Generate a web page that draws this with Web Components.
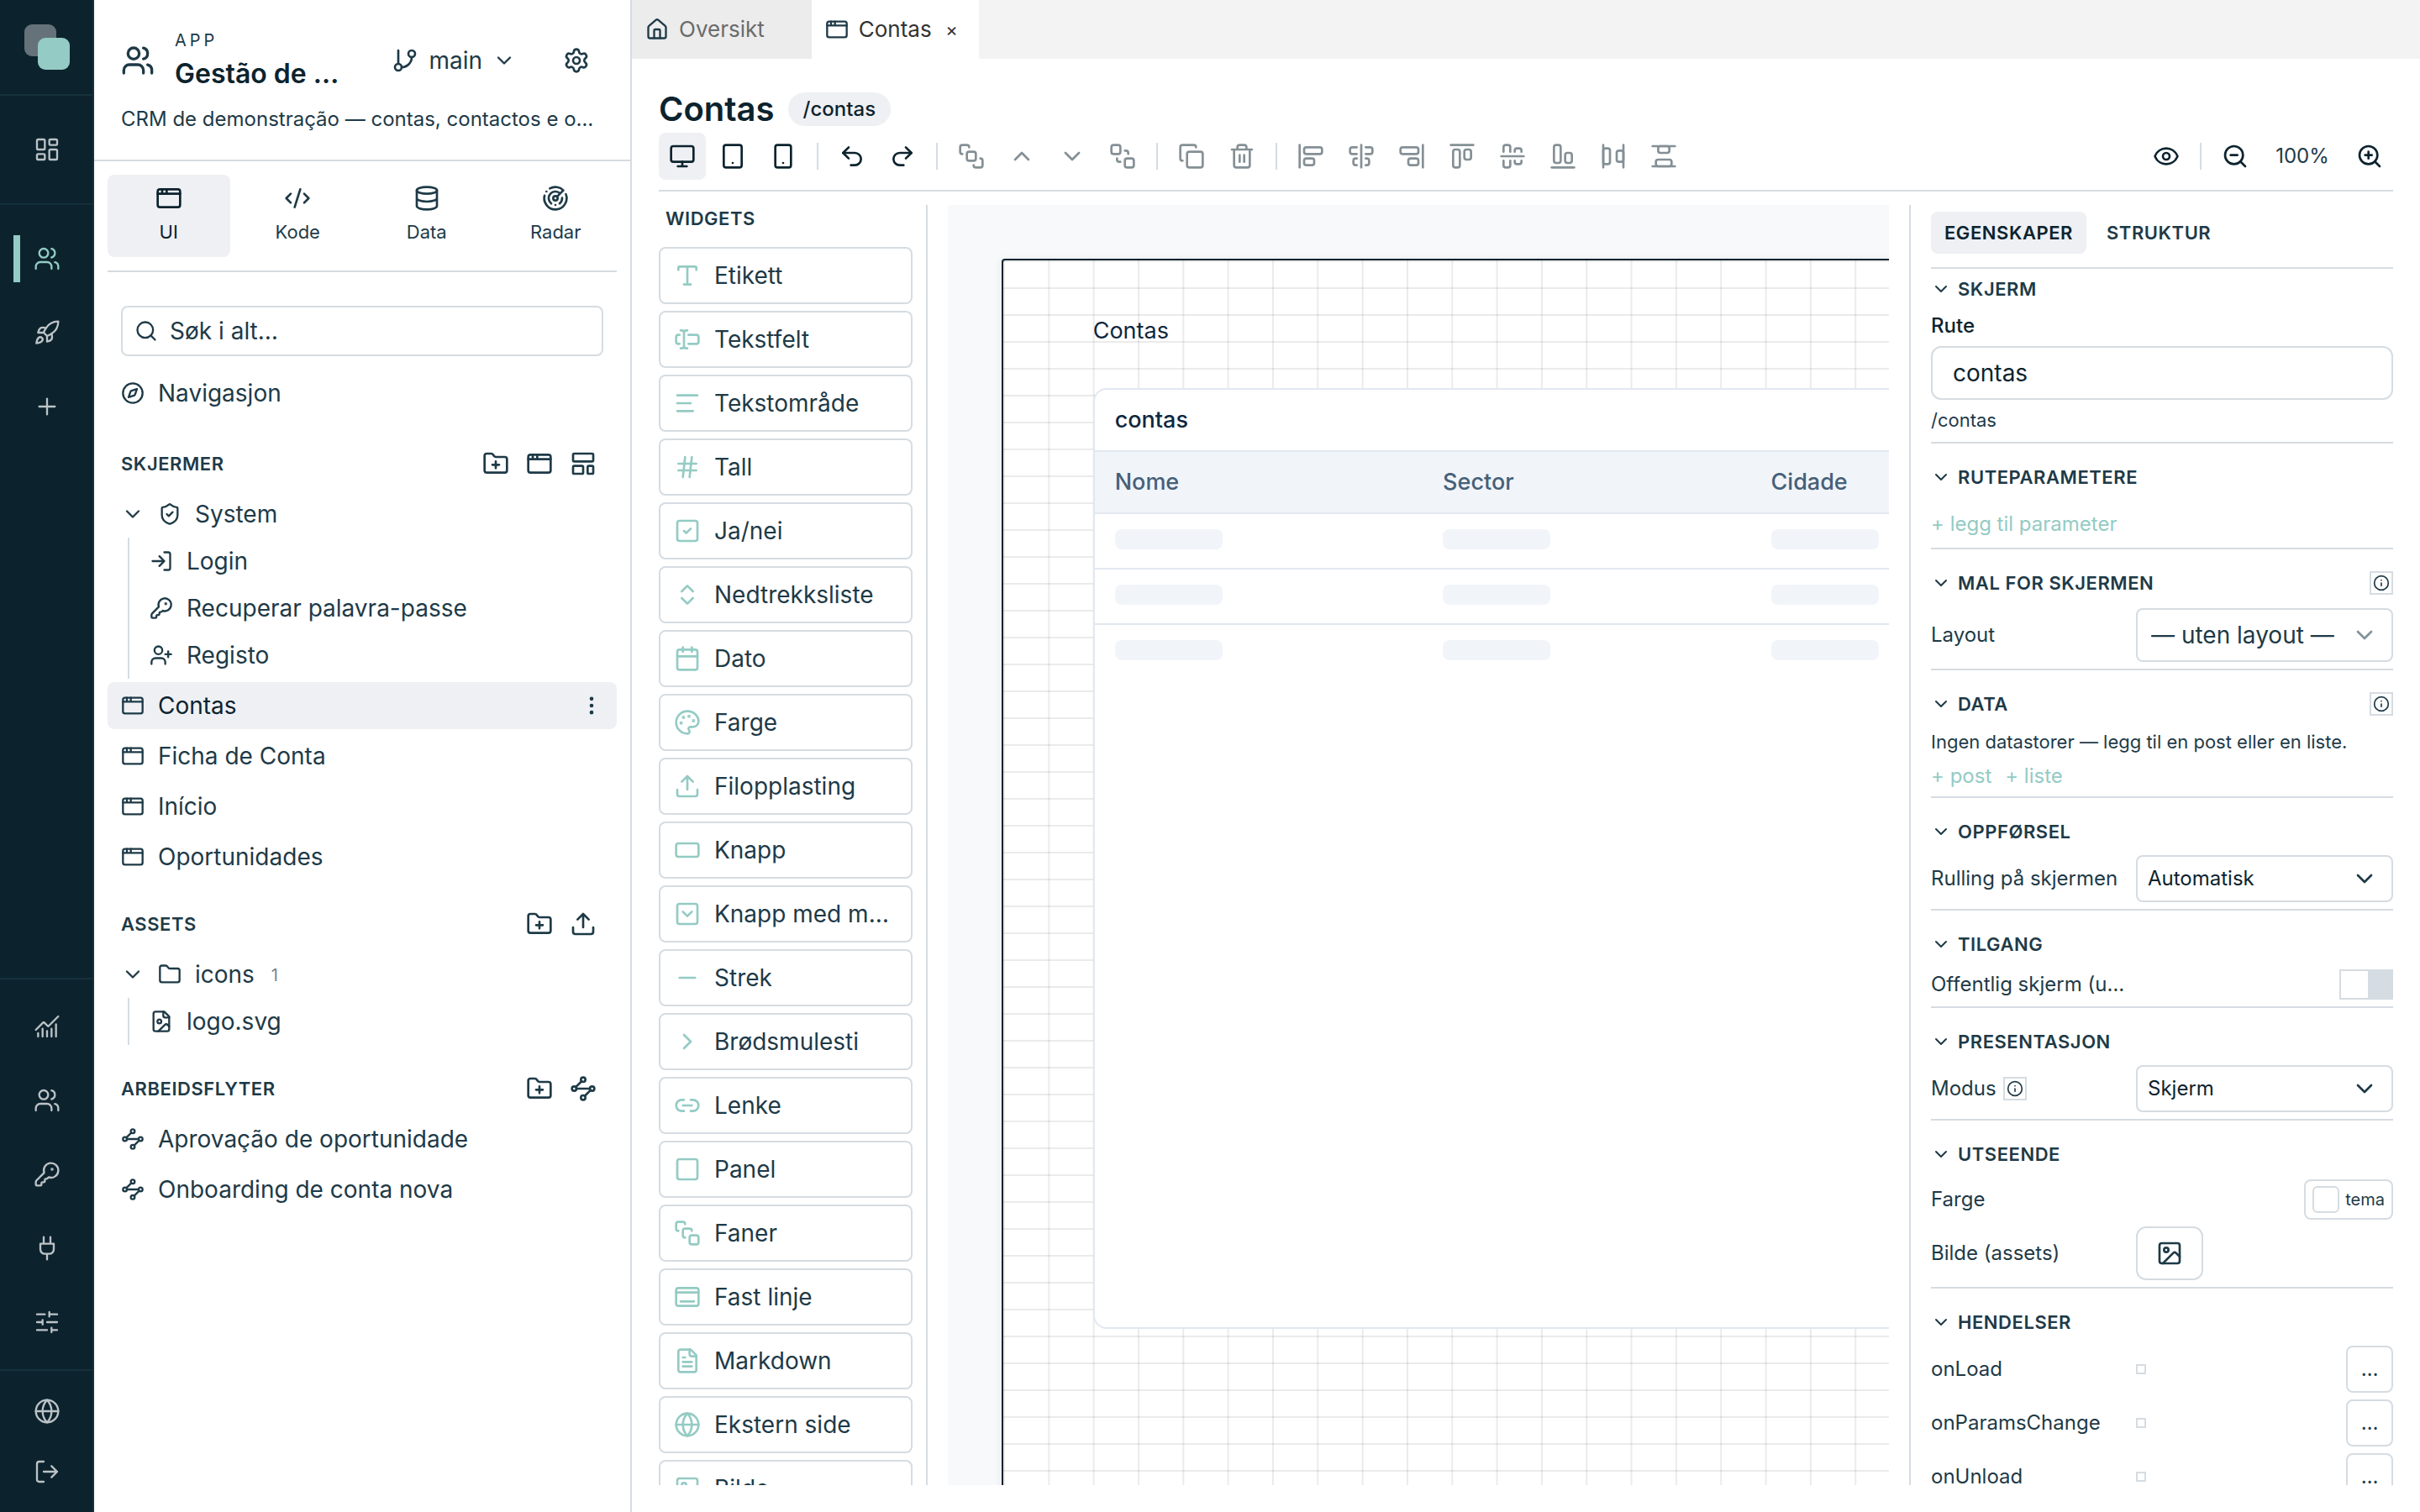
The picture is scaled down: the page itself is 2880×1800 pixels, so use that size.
<!DOCTYPE html>
<html lang="no">
<head>
<meta charset="utf-8">
<title>Contas</title>
<style>
  body {
    margin: 0;
    height: 100vh;
    overflow: hidden;
    font-family: Inter, "Liberation Sans", sans-serif;
    font-size: 28px;
    line-height: 36px;
    color: #1e3a47;
    background: #fff;
    --ink: #0c232e;
    --text: #1e3a47;
    --line: #d5dce2;
    --soft: #eff0f4;
    --teal: #94cbc4;
  }
</style>
</head>
<body>
<builder-app></builder-app>

<script>
// Icon shapes on a 24x24 grid
const ICONS = {
  dashboard: '<rect width="7" height="9" x="3" y="3" rx="1"/><rect width="7" height="5" x="14" y="3" rx="1"/><rect width="7" height="9" x="14" y="12" rx="1"/><rect width="7" height="5" x="3" y="16" rx="1"/>',
  users: '<path d="M16 21v-2a4 4 0 0 0-4-4H6a4 4 0 0 0-4 4v2M16 3.128a4 4 0 0 1 0 7.744M22 21v-2a4 4 0 0 0-3-3.87"/><circle cx="9" cy="7" r="4"/>',
  rocket: '<path d="M4.5 16.5c-1.5 1.26-2 5-2 5s3.74-.5 5-2c.71-.84.7-2.13-.09-2.91a2.18 2.18 0 0 0-2.91-.09z"/><path d="m12 15-3-3a22 22 0 0 1 2-3.95A12.88 12.88 0 0 1 22 2c0 2.72-.78 7.5-6 11a22.35 22.35 0 0 1-4 2z"/><path d="M9 12H4s.55-3.03 2-4c1.62-1.08 5 0 5 0M12 15v5s3.03-.55 4-2c1.08-1.62 0-5 0-5"/>',
  plus: '<path d="M5 12h14M12 5v14"/>',
  chart: '<path d="M12 16v5M16 14v7M20 10v11M22 3l-8.646 8.646a.5.5 0 0 1-.708 0L9.354 8.354a.5.5 0 0 0-.707 0L2 15M4 18v3M8 14v7"/>',
  key: '<path d="M2.586 17.414A2 2 0 0 0 2 18.828V21a1 1 0 0 0 1 1h3a1 1 0 0 0 1-1v-1a1 1 0 0 1 1-1h1a1 1 0 0 0 1-1v-1a1 1 0 0 1 1-1h.172a2 2 0 0 0 1.414-.586l.814-.814a6.5 6.5 0 1 0-4-4z"/><circle cx="16.5" cy="7.5" r=".5" fill="currentColor"/>',
  plug: '<path d="M12 22v-5M9 8V2M15 8V2M18 8v5a4 4 0 0 1-4 4h-4a4 4 0 0 1-4-4V8Z"/>',
  sliders: '<path d="M10 5H3M12 19H3M14 3v4M16 17v4M21 12h-9M21 19h-5M21 5h-7M8 10v4M8 12H3"/>',
  globe: '<circle cx="12" cy="12" r="10"/><path d="M12 2a14.5 14.5 0 0 0 0 20 14.5 14.5 0 0 0 0-20M2 12h20"/>',
  logout: '<path d="m16 17 5-5-5-5M21 12H9M9 21H5a2 2 0 0 1-2-2V5a2 2 0 0 1 2-2h4"/>',
  login: '<path d="m10 17 5-5-5-5M15 12H3M15 3h4a2 2 0 0 1 2 2v14a2 2 0 0 1-2 2h-4"/>',
  branch: '<path d="M6 3v12M18 9a9 9 0 0 1-9 9"/><circle cx="18" cy="6" r="3"/><circle cx="6" cy="18" r="3"/>',
  down: '<path d="m6 9 6 6 6-6"/>',
  up: '<path d="m18 15-6-6-6 6"/>',
  right: '<path d="m9 18 6-6-6-6"/>',
  settings: '<path d="M9.671 4.136a2.34 2.34 0 0 1 4.659 0 2.34 2.34 0 0 0 3.319 1.915 2.34 2.34 0 0 1 2.33 4.033 2.34 2.34 0 0 0 0 3.831 2.34 2.34 0 0 1-2.33 4.033 2.34 2.34 0 0 0-3.319 1.915 2.34 2.34 0 0 1-4.659 0 2.34 2.34 0 0 0-3.32-1.915 2.34 2.34 0 0 1-2.33-4.033 2.34 2.34 0 0 0 0-3.831A2.34 2.34 0 0 1 6.35 6.051a2.34 2.34 0 0 0 3.319-1.915"/><circle cx="12" cy="12" r="3"/>',
  window: '<rect x="2" y="4" width="20" height="16" rx="2"/><path d="M10 4v4M2 8h20M6 4v4"/>',
  code: '<path d="m18 16 4-4-4-4M6 8l-4 4 4 4M14.5 4l-5 16"/>',
  database: '<ellipse cx="12" cy="5" rx="9" ry="3"/><path d="M3 5V19A9 3 0 0 0 21 19V5M3 12A9 3 0 0 0 21 12"/>',
  radar: '<path d="M19.07 4.93A10 10 0 0 0 6.99 3.34M4 6h.01M2.29 9.62A10 10 0 1 0 21.31 8.35M16.24 7.76A6 6 0 1 0 8.23 16.67M12 18h.01M17.99 11.66A6 6 0 0 1 15.77 16.67M13.41 10.59l5.66-5.66"/><circle cx="12" cy="12" r="2"/>',
  search: '<path d="m21 21-4.34-4.34"/><circle cx="11" cy="11" r="8"/>',
  compass: '<circle cx="12" cy="12" r="10"/><path d="m16.24 7.76-1.804 5.411a2 2 0 0 1-1.265 1.265L7.76 16.24l1.804-5.411a2 2 0 0 1 1.265-1.265z"/>',
  folder: '<path d="M20 20a2 2 0 0 0 2-2V8a2 2 0 0 0-2-2h-7.9a2 2 0 0 1-1.69-.9L9.6 3.9A2 2 0 0 0 7.93 3H4a2 2 0 0 0-2 2v13a2 2 0 0 0 2 2Z"/>',
  folderPlus: '<path d="M12 10v6M9 13h6M20 20a2 2 0 0 0 2-2V8a2 2 0 0 0-2-2h-7.9a2 2 0 0 1-1.69-.9L9.6 3.9A2 2 0 0 0 7.93 3H4a2 2 0 0 0-2 2v13a2 2 0 0 0 2 2Z"/>',
  template: '<rect width="18" height="7" x="3" y="3" rx="1"/><rect width="9" height="7" x="3" y="14" rx="1"/><rect width="5" height="7" x="16" y="14" rx="1"/>',
  shield: '<path d="M20 13c0 5-3.5 7.5-7.66 8.95a1 1 0 0 1-.67-.01C7.5 20.5 4 18 4 13V6a1 1 0 0 1 1-1c2 0 4.5-1.2 6.24-2.72a1.17 1.17 0 0 1 1.52 0C14.51 3.81 17 5 19 5a1 1 0 0 1 1 1z"/><path d="m9 12 2 2 4-4"/>',
  userPlus: '<path d="M16 21v-2a4 4 0 0 0-4-4H6a4 4 0 0 0-4 4v2M19 8v6M22 11h-6"/><circle cx="9" cy="7" r="4"/>',
  upload: '<path d="M12 3v12M17 8l-5-5-5 5M21 15v4a2 2 0 0 1-2 2H5a2 2 0 0 1-2-2v-4"/>',
  fileImage: '<path d="M15 2H6a2 2 0 0 0-2 2v16a2 2 0 0 0 2 2h12a2 2 0 0 0 2-2V7Z"/><path d="M14 2v4a2 2 0 0 0 2 2h4M20 17l-1.296-1.296a2.41 2.41 0 0 0-3.408 0L9 22"/><circle cx="10" cy="12" r="2"/>',
  fileText: '<path d="M15 2H6a2 2 0 0 0-2 2v16a2 2 0 0 0 2 2h12a2 2 0 0 0 2-2V7Z"/><path d="M14 2v4a2 2 0 0 0 2 2h4M10 9H8M16 13H8M16 17H8"/>',
  waypoints: '<path d="m10.586 5.414-5.172 5.172M18.586 13.414l-5.172 5.172M6 12h12"/><circle cx="12" cy="20" r="2"/><circle cx="12" cy="4" r="2"/><circle cx="20" cy="12" r="2"/><circle cx="4" cy="12" r="2"/>',
  house: '<path d="M15 21v-8a1 1 0 0 0-1-1h-4a1 1 0 0 0-1 1v8"/><path d="M3 10a2 2 0 0 1 .709-1.528l7-6a2 2 0 0 1 2.582 0l7 6A2 2 0 0 1 21 10v9a2 2 0 0 1-2 2H5a2 2 0 0 1-2-2z"/>',
  more: '<circle cx="12" cy="12" r="1"/><circle cx="12" cy="5" r="1"/><circle cx="12" cy="19" r="1"/>',
  monitor: '<rect width="20" height="14" x="2" y="3" rx="2"/><path d="M8 21h8M12 17v4"/>',
  tablet: '<rect width="16" height="20" x="4" y="2" rx="2"/><path d="M12 18h.01"/>',
  phone: '<rect width="14" height="20" x="5" y="2" rx="2"/><path d="M12 18h.01"/>',
  undo: '<path d="M9 14 4 9l5-5"/><path d="M4 9h10.5a5.5 5.5 0 0 1 0 11H11"/>',
  redo: '<path d="m15 14 5-5-5-5"/><path d="M20 9H9.5a5.5 5.5 0 0 0 0 11H13"/>',
  front: '<rect x="8" y="8" width="8" height="8" rx="2"/><path d="M4 10a2 2 0 0 1-2-2V4a2 2 0 0 1 2-2h4a2 2 0 0 1 2 2M14 20a2 2 0 0 0 2 2h4a2 2 0 0 0 2-2v-4a2 2 0 0 0-2-2"/>',
  back: '<rect x="14" y="14" width="8" height="8" rx="2"/><rect x="2" y="2" width="8" height="8" rx="2"/><path d="M7 14v1a2 2 0 0 0 2 2h1M14 7h1a2 2 0 0 1 2 2v1"/>',
  copy: '<rect width="14" height="14" x="8" y="8" rx="2"/><path d="M4 16c-1.1 0-2-.9-2-2V4c0-1.1.9-2 2-2h10c1.1 0 2 .9 2 2"/>',
  trash: '<path d="M3 6h18M19 6v14a2 2 0 0 1-2 2H7a2 2 0 0 1-2-2V6M8 6V4a2 2 0 0 1 2-2h4a2 2 0 0 1 2 2v2M10 11v6M14 11v6"/>',
  alignLeft: '<rect width="9" height="6" x="6" y="14" rx="2"/><rect width="16" height="6" x="6" y="4" rx="2"/><path d="M2 2v20"/>',
  alignCenter: '<path d="M12 2v20M8 10H4a2 2 0 0 1-2-2V6c0-1.1.9-2 2-2h4M16 10h4a2 2 0 0 0 2-2V6a2 2 0 0 0-2-2h-4M8 20H7a2 2 0 0 1-2-2v-2c0-1.1.9-2 2-2h1M16 14h1a2 2 0 0 1 2 2v2a2 2 0 0 1-2 2h-1"/>',
  alignRight: '<rect width="16" height="6" x="2" y="4" rx="2"/><rect width="9" height="6" x="9" y="14" rx="2"/><path d="M22 22V2"/>',
  alignTop: '<rect width="6" height="16" x="4" y="6" rx="2"/><rect width="6" height="9" x="14" y="6" rx="2"/><path d="M22 2H2"/>',
  alignMiddle: '<path d="M2 12h20M10 16v4a2 2 0 0 1-2 2H6a2 2 0 0 1-2-2v-4M10 8V4a2 2 0 0 0-2-2H6a2 2 0 0 0-2 2v4M20 16v1a2 2 0 0 1-2 2h-2a2 2 0 0 1-2-2v-1M14 8V7c0-1.1.9-2 2-2h2a2 2 0 0 1 2 2v1"/>',
  alignBottom: '<rect width="6" height="16" x="4" y="2" rx="2"/><rect width="6" height="9" x="14" y="9" rx="2"/><path d="M22 22H2"/>',
  spaceH: '<rect width="6" height="14" x="3" y="5" rx="2"/><rect width="6" height="10" x="15" y="7" rx="2"/><path d="M3 2v20M21 2v20"/>',
  spaceV: '<rect width="14" height="6" x="5" y="15" rx="2"/><rect width="10" height="6" x="7" y="3" rx="2"/><path d="M2 21h20M2 3h20"/>',
  eye: '<path d="M2.062 12.348a1 1 0 0 1 0-.696 10.75 10.75 0 0 1 19.876 0 1 1 0 0 1 0 .696 10.75 10.75 0 0 1-19.876 0"/><circle cx="12" cy="12" r="3"/>',
  zoomOut: '<circle cx="11" cy="11" r="8"/><path d="m21 21-4.35-4.35M8 11h6"/>',
  zoomIn: '<circle cx="11" cy="11" r="8"/><path d="m21 21-4.35-4.35M8 11h6M11 8v6"/>',
  type: '<path d="M12 4v16M4 7V5a1 1 0 0 1 1-1h14a1 1 0 0 1 1 1v2M9 20h6"/>',
  textInput: '<path d="M12 20h-1a2 2 0 0 1-2-2 2 2 0 0 1-2 2H6M13 8h7a2 2 0 0 1 2 2v4a2 2 0 0 1-2 2h-7M5 16H4a2 2 0 0 1-2-2v-4a2 2 0 0 1 2-2h1M6 4h1a2 2 0 0 1 2 2 2 2 0 0 1 2-2h1M9 6v12"/>',
  text: '<path d="M21 5H3M15 12H3M17 19H3"/>',
  hash: '<path d="M4 9h16M4 15h16M10 3 8 21M16 3l-2 18"/>',
  check: '<rect width="18" height="18" x="3" y="3" rx="2"/><path d="m9 12 2 2 4-4"/>',
  upDown: '<path d="m7 15 5 5 5-5M7 9l5-5 5 5"/>',
  calendar: '<path d="M8 2v4M16 2v4M3 10h18"/><rect width="18" height="18" x="3" y="4" rx="2"/>',
  palette: '<path d="M12 22a1 1 0 0 1 0-20 10 9 0 0 1 10 9 5 5 0 0 1-5 5h-2.25a1.75 1.75 0 0 0-1.4 2.8l.3.4a1.75 1.75 0 0 1-1.4 2.8z"/><g fill="currentColor"><circle cx="13.5" cy="6.5" r=".5"/><circle cx="17.5" cy="10.5" r=".5"/><circle cx="6.5" cy="12.5" r=".5"/><circle cx="8.5" cy="7.5" r=".5"/></g>',
  rectangle: '<rect width="20" height="12" x="2" y="6" rx="2"/>',
  squareDown: '<rect width="18" height="18" x="3" y="3" rx="2"/><path d="m16 10-4 4-4-4"/>',
  minus: '<path d="M5 12h14"/>',
  link: '<path d="M9 17H7A5 5 0 0 1 7 7h2M15 7h2a5 5 0 1 1 0 10h-2M8 12h8"/>',
  square: '<rect width="18" height="18" x="3" y="3" rx="2"/>',
  stack: '<path d="M4 10c-1.1 0-2-.9-2-2V4c0-1.1.9-2 2-2h4c1.1 0 2 .9 2 2M10 16c-1.1 0-2-.9-2-2v-4c0-1.1.9-2 2-2h4c1.1 0 2 .9 2 2"/><rect width="8" height="8" x="14" y="14" rx="2"/>',
  dock: '<path d="M2 8h20M6 16h12"/><rect width="20" height="16" x="2" y="4" rx="2"/>',
  image: '<rect width="18" height="18" x="3" y="3" rx="2"/><circle cx="9" cy="9" r="2"/><path d="m21 15-3.086-3.086a2 2 0 0 0-2.828 0L6 21"/>',
  info: '<circle cx="12" cy="12" r="10"/><path d="M12 16v-4M12 8h.01"/>'
};

// Shared reset for the native controls
const RESET = `
  * { box-sizing: border-box; }
  button, input, select {
    font: inherit; color: inherit; background: none;
    border: 0; margin: 0; padding: 0; text-align: left;
  }
  button { cursor: pointer; }
  a { color: inherit; text-decoration: none; }
  h1, h2, p { margin: 0; font: inherit; }
`;

class UiIcon extends HTMLElement {
  connectedCallback() {
    const size = this.getAttribute('size') || 32;
    this.attachShadow({ mode: 'open' }).innerHTML = `
      <style>
        :host { display: block; flex: none; width: ${size}px; height: ${size}px; }
        svg { display: block; width: 100%; height: 100%; }
      </style>
      <svg viewBox="0 0 24 24" fill="none" stroke="currentColor" stroke-width="${this.getAttribute('stroke') || 2}"
        stroke-linecap="round" stroke-linejoin="round" aria-hidden="true">${ICONS[this.getAttribute('name')]}</svg>`;
  }
}
customElements.define('ui-icon', UiIcon);

// Dark strip on the far left
class AppRail extends HTMLElement {
  connectedCallback() {
    const item = ([icon, label, active]) =>
      `<button class="${active ? 'on' : ''}" aria-label="${label}"><ui-icon name="${icon}" stroke="1.75"></ui-icon></button>`;
    this.attachShadow({ mode: 'open' }).innerHTML = `
      <style>
        ${RESET}
        :host { display: flex; flex-direction: column; background: var(--ink); color: #bcc3c6; border-right: 2px solid #15303c; box-sizing: border-box; }
        .logo { height: 114px; padding: 28px 26px; border-bottom: 2px solid #15303c; }
        .logo svg { display: block; width: 58px; height: 58px; }
        nav { display: flex; flex-direction: column; align-items: stretch; gap: 32px; padding: 36px 0; border-bottom: 2px solid #15303c; }
        nav.grow { flex: 1; }
        nav.mid { padding: 28px 0; }
        nav.last { gap: 16px; padding: 20px 0; border-bottom: 0; }
        button { display: flex; align-items: center; height: 56px; padding-left: 16px; border-left: 8px solid transparent; margin-left: 16px; }
        button.on { color: var(--teal); border-color: var(--teal); }
      </style>
      <div class="logo">
        <svg viewBox="0 0 58 58"><rect x="3" y="1" width="38" height="38" rx="9" fill="#65727a"/><rect x="19" y="17" width="38" height="38" rx="9" fill="#94cbc4"/></svg>
      </div>
      <nav>${item(['dashboard', 'Oversikt'])}</nav>
      <nav class="grow">${[['users', 'CRM', true], ['rocket', 'Lansering'], ['plus', 'Ny app']].map(item).join('')}</nav>
      <nav class="mid">${[['chart', 'Statistikk'], ['users', 'Brukere'], ['key', 'Tilgang'], ['plug', 'Integrasjoner'], ['sliders', 'Innstillinger']].map(item).join('')}</nav>
      <nav class="last">${[['globe', 'Språk'], ['logout', 'Logg ut']].map(item).join('')}</nav>`;
  }
}
customElements.define('app-rail', AppRail);

// One row of the project tree. The slot takes the name.
class TreeRow extends HTMLElement {
  connectedCallback() {
    this.attachShadow({ mode: 'open' }).innerHTML = `
      <style>
        ${RESET}
        :host { display: block; }
        a { display: flex; align-items: center; gap: 16px; height: 56px; padding: 0 16px; border-radius: 8px; }
        :host([selected]) a { background: var(--soft); color: var(--ink); }
        :host([selected]) ui-icon { color: var(--text); }
        :host([child]) a { padding-left: 24px; }
        .name { flex: 1; white-space: nowrap; }
      </style>
      <a href="#">
        ${this.hasAttribute('open') ? '<ui-icon name="down" size="28"></ui-icon>' : ''}
        <ui-icon name="${this.getAttribute('icon')}" size="28"></ui-icon>
        <span class="name"><slot></slot></span>
        ${this.hasAttribute('selected') ? '<ui-icon name="more" size="28"></ui-icon>' : ''}
      </a>`;
  }
}
customElements.define('tree-row', TreeRow);

// Heading with action icons, rows in the slot
class TreeSection extends HTMLElement {
  connectedCallback() {
    const actions = this.getAttribute('actions').split(' ')
      .map(n => `<button aria-label="${n}"><ui-icon name="${n}"></ui-icon></button>`).join('');
    this.attachShadow({ mode: 'open' }).innerHTML = `
      <style>
        ${RESET}
        :host { display: flex; flex-direction: column; gap: 4px; margin-top: 24px; }
        header { display: flex; align-items: center; justify-content: space-between; height: 56px; padding: 0 24px 0 16px; }
        h2 { font-size: 22px; font-weight: 600; letter-spacing: .025em; }
        div { display: flex; gap: 20px; }
      </style>
      <header><h2>${this.getAttribute('label')}</h2><div>${actions}</div></header>
      <slot></slot>`;
  }
}
customElements.define('tree-section', TreeSection);

class SidePanel extends HTMLElement {
  connectedCallback() {
    this.attachShadow({ mode: 'open' }).innerHTML = `
      <style>
        ${RESET}
        :host { display: block; border-right: 2px solid var(--line); box-sizing: border-box; overflow: hidden; }
        header { height: 192px; padding: 32px; border-bottom: 2px solid var(--line); }
        .top { display: flex; align-items: center; height: 80px; padding-right: 16px; }
        .title { flex: 1; min-width: 0; margin-left: 24px; }
        .kind { font-size: 20px; line-height: 32px; letter-spacing: 4px; }
        h1 { max-width: 200px; font-size: 32px; line-height: 48px; font-weight: 600; color: var(--ink); }
        h1, .about { white-space: nowrap; overflow: hidden; text-overflow: ellipsis; }
        .branch { display: flex; align-items: center; gap: 12px; margin-right: 56px; }
        .about { font-size: 24px; line-height: 32px; margin-top: 14px; }
        .body { padding: 16px; }
        .modes { display: grid; grid-template-columns: repeat(4, 1fr); gap: 8px; padding-bottom: 16px; border-bottom: 2px solid var(--line); }
        .modes button { display: flex; flex-direction: column; align-items: center; gap: 8px; height: 98px; padding-top: 12px; font-size: 22px; line-height: 32px; border-radius: 8px; }
        .modes .on { background: var(--soft); color: var(--ink); }
        .search { display: flex; align-items: center; gap: 14px; height: 60px; margin: 40px 16px 16px; padding: 0 14px; border: 2px solid var(--line); border-radius: 8px; }
        .search input { flex: 1; min-width: 0; outline: 0; }
        .search input::placeholder { color: var(--text); opacity: 1; }
        .nav { margin-bottom: 28px; }
        .kids { display: block; margin: -4px 0 0 24px; border-left: 2px solid var(--line); }
        small { font-size: 20px; color: #76868e; margin-left: 12px; vertical-align: 2px; }
      </style>
      <header>
        <div class="top">
          <ui-icon name="users" size="40"></ui-icon>
          <div class="title"><div class="kind">APP</div><h1>Gestão de Clientes</h1></div>
          <button class="branch"><ui-icon name="branch"></ui-icon>main<ui-icon name="down" size="28"></ui-icon></button>
          <button aria-label="Innstillinger"><ui-icon name="settings"></ui-icon></button>
        </div>
        <p class="about">CRM de demonstração — contas, contactos e oportunidades</p>
      </header>
      <div class="body">
        <div class="modes">
          <button class="on"><ui-icon name="window"></ui-icon>UI</button>
          <button><ui-icon name="code"></ui-icon>Kode</button>
          <button><ui-icon name="database"></ui-icon>Data</button>
          <button><ui-icon name="radar"></ui-icon>Radar</button>
        </div>
        <label class="search"><ui-icon name="search" size="28"></ui-icon><input type="text" placeholder="Søk i alt…" aria-label="Søk i alt"></label>
        <tree-row class="nav" icon="compass">Navigasjon</tree-row>
        <tree-section label="SKJERMER" actions="folderPlus window template">
          <tree-row icon="shield" open>System</tree-row>
          <div class="kids">
            <tree-row icon="login" child>Login</tree-row>
            <tree-row icon="key" child>Recuperar palavra-passe</tree-row>
            <tree-row icon="userPlus" child>Registo</tree-row>
          </div>
          <tree-row icon="window" selected>Contas</tree-row>
          <tree-row icon="window">Ficha de Conta</tree-row>
          <tree-row icon="window">Início</tree-row>
          <tree-row icon="window">Oportunidades</tree-row>
        </tree-section>
        <tree-section label="ASSETS" actions="folderPlus upload">
          <tree-row icon="folder" open>icons <small>1</small></tree-row>
          <div class="kids"><tree-row icon="fileImage" child>logo.svg</tree-row></div>
        </tree-section>
        <tree-section label="ARBEIDSFLYTER" actions="folderPlus waypoints">
          <tree-row icon="waypoints">Aprovação de oportunidade</tree-row>
          <tree-row icon="waypoints">Onboarding de conta nova</tree-row>
        </tree-section>
      </div>`;
  }
}
customElements.define('side-panel', SidePanel);

class TabStrip extends HTMLElement {
  connectedCallback() {
    this.attachShadow({ mode: 'open' }).innerHTML = `
      <style>
        ${RESET}
        :host { display: flex; height: 70px; background: #f3f3f3; font-size: 26px; }
        .tab { display: flex; align-items: center; gap: 12px; padding: 0 16px; background: #ececec; color: #6b6b6b; }
        .tab.home { padding-right: 56px; }
        .tab.on { background: #fff; color: #333; }
        .tab ui-icon { color: var(--text); }
        .close { width: 24px; margin-right: 4px; font-size: 22px; text-align: center; }
      </style>
      <a class="tab home" href="#"><ui-icon name="house" size="28"></ui-icon>Oversikt</a>
      <div class="tab on"><ui-icon name="window" size="28"></ui-icon>Contas<button class="close" aria-label="Lukk">×</button></div>`;
  }
}
customElements.define('tab-strip', TabStrip);

class DesignToolbar extends HTMLElement {
  connectedCallback() {
    const row = names => names.split(' ').map(n => {
      if (n === '|') return '<i></i>';
      const [icon, state] = n.split(':');
      return `<button class="${state === 'on' ? 'on' : ''}" ${state === 'off' ? 'disabled' : ''} aria-label="${icon}"><ui-icon name="${icon}"></ui-icon></button>`;
    }).join('');
    this.attachShadow({ mode: 'open' }).innerHTML = `
      <style>
        ${RESET}
        :host { display: flex; align-items: center; gap: 4px; padding-bottom: 12px; border-bottom: 2px solid var(--line); color: var(--ink); }
        button { display: grid; place-items: center; width: 56px; height: 56px; border-radius: 8px; }
        button:disabled { opacity: .5; cursor: default; }
        .on { background: var(--soft); }
        i { width: 2px; height: 32px; margin: 0 8px; background: var(--line); }
        .space { flex: 1; }
        output { width: 96px; font-size: 24px; text-align: center; color: var(--text); }
      </style>
      ${row('monitor:on tablet phone | undo redo | front:off up:off down:off back:off | copy:off trash:off | alignLeft:off alignCenter:off alignRight:off alignTop:off alignMiddle:off alignBottom:off spaceH:off spaceV:off')}
      <span class="space"></span>
      ${row('eye | zoomOut')}<output>100%</output>${row('zoomIn')}`;
  }
}
customElements.define('design-toolbar', DesignToolbar);

class WidgetPalette extends HTMLElement {
  connectedCallback() {
    const widgets = [
      ['type', 'Etikett'], ['textInput', 'Tekstfelt'], ['text', 'Tekstområde'], ['hash', 'Tall'],
      ['check', 'Ja/nei'], ['upDown', 'Nedtrekksliste'], ['calendar', 'Dato'], ['palette', 'Farge'],
      ['upload', 'Filopplasting'], ['rectangle', 'Knapp'], ['squareDown', 'Knapp med meny'], ['minus', 'Strek'],
      ['right', 'Brødsmulesti'], ['link', 'Lenke'], ['square', 'Panel'], ['stack', 'Faner'],
      ['dock', 'Fast linje'], ['fileText', 'Markdown'], ['globe', 'Ekstern side'], ['image', 'Bilde']
    ];
    this.attachShadow({ mode: 'open' }).innerHTML = `
      <style>
        ${RESET}
        :host { display: block; overflow: hidden; padding-right: 16px; border-right: 2px solid var(--line); box-sizing: border-box; }
        h2 { height: 50px; padding-left: 8px; font-size: 22px; line-height: 32px; font-weight: 600; letter-spacing: .025em; }
        div { display: flex; flex-direction: column; gap: 8px; }
        button { display: flex; flex: none; align-items: center; gap: 16px; height: 68px; padding: 0 16px; border: 2px solid var(--line); border-radius: 8px; }
        ui-icon { color: var(--teal); }
        span { min-width: 0; white-space: nowrap; overflow: hidden; text-overflow: ellipsis; }
      </style>
      <h2>WIDGETS</h2>
      <div>${widgets.map(([icon, name]) => `<button><ui-icon name="${icon}"></ui-icon><span>${name}</span></button>`).join('')}</div>`;
  }
}
customElements.define('widget-palette', WidgetPalette);

// Artboard: 48 columns, rows of 32px, wider than the view
class DesignCanvas extends HTMLElement {
  connectedCallback() {
    const bar = '<td><span></span></td>';
    const row = `<tr>${bar.repeat(6)}</tr>`;
    this.attachShadow({ mode: 'open' }).innerHTML = `
      <style>
        ${RESET}
        :host { display: block; overflow: hidden; padding: 64px 0 0 64px; background: #f7f9fb; box-sizing: border-box; font-size: 27px; }
        .page {
          box-sizing: content-box; width: 2560px; height: 1600px; border: 2px solid var(--ink); border-radius: 4px; color: #0f2740;
          box-shadow: 0 2px 12px #0c232e14;
          background: linear-gradient(90deg, #00000014 2px, transparent 2px) 0 0 / calc(100% / 48) 32px,
            linear-gradient(#00000014 2px, transparent 2px) 0 0 / 100% 32px, #fff;
        }
        .label { padding: 64px calc(100% / 24) 0; height: 152px; line-height: 40px; }
        .card { width: calc(100% * 44 / 48); height: 1120px; margin-left: calc(100% / 24); border: 2px solid #e2e8f0; border-radius: 16px; background: #fff; overflow: hidden; }
        table { width: 100%; table-layout: fixed; border-collapse: collapse; }
        caption { height: 72px; padding: 0 24px; line-height: 72px; font-weight: 500; text-align: left; }
        th { height: 74px; padding: 0 24px; background: #f1f4f9; border: solid #e2e8f0; border-width: 2px 0; font-weight: 500; text-align: left; color: #456078; }
        td { height: 66px; padding: 0 24px 4px; border-bottom: 2px solid #e2e8f0; }
        tr:last-child td { height: 64px; border-bottom: 0; }
        td span { display: block; width: 128px; height: 24px; border-radius: 8px; background: #f1f4f9; }
      </style>
      <div class="page">
        <div class="label">Contas</div>
        <div class="card">
          <table>
            <caption>contas</caption>
            <thead><tr><th>Nome</th><th>Sector</th><th>Cidade</th><th></th><th></th><th></th></tr></thead>
            <tbody>${row.repeat(3)}</tbody>
          </table>
        </div>
      </div>`;
  }
}
customElements.define('design-canvas', DesignCanvas);

// Collapsible group in the properties column
class PropSection extends HTMLElement {
  connectedCallback() {
    this.attachShadow({ mode: 'open' }).innerHTML = `
      <style>
        ${RESET}
        :host { display: flex; flex-direction: column; gap: 8px; padding: 26px 0 8px; border-bottom: 2px solid var(--line); }
        :host([first]) { padding-top: 10px; }
        header { display: flex; align-items: center; height: 28px; margin-bottom: 6px; }
        :host([roomy]) header { margin-bottom: 8px; }
        button { display: flex; align-items: center; gap: 8px; flex: 1; font-size: 22px; font-weight: 600; letter-spacing: .025em; }
      </style>
      <header><button aria-expanded="true"><ui-icon name="down" size="24"></ui-icon>${this.getAttribute('label')}</button><slot name="extra"></slot></header>
      <slot></slot>`;
  }
}
customElements.define('prop-section', PropSection);

class InfoButton extends HTMLElement {
  connectedCallback() {
    this.attachShadow({ mode: 'open' }).innerHTML = `
      <style>
        ${RESET}
        :host { display: block; flex: none; }
        button { display: grid; place-items: center; width: 28px; height: 28px; border: 2px solid var(--line); }
      </style>
      <button aria-label="Info"><ui-icon name="info" size="20"></ui-icon></button>`;
  }
}
customElements.define('info-button', InfoButton);

class PropsPanel extends HTMLElement {
  connectedCallback() {
    const event = name => `
      <div class="row"><span class="cap">${name}</span><i class="dot"></i><button class="dots" aria-label="${name}">…</button></div>`;
    this.attachShadow({ mode: 'open' }).innerHTML = `
      <style>
        ${RESET}
        :host { display: block; overflow: hidden; padding: 8px 0 0 24px; border-left: 2px solid var(--line); box-sizing: border-box; font-size: 24px; line-height: 32px; }
        .tabs { display: flex; gap: 8px; height: 68px; padding-bottom: 16px; border-bottom: 2px solid var(--line); }
        .tabs button { padding: 0 16px; font-size: 22px; font-weight: 600; letter-spacing: .025em; border-radius: 8px; }
        .tabs .on { background: var(--soft); color: var(--ink); }
        .strong { font-weight: 500; color: var(--ink); }
        .box { width: 100%; height: 64px; padding: 0 24px; border: 2px solid var(--line); border-radius: 12px; font-size: 28px; color: var(--ink); }
        .hint { margin-bottom: 2px; font-size: 22px; }
        .note { margin-bottom: 2px; font-size: 22px; line-height: 30px; }
        .links { display: flex; gap: 16px; color: var(--teal); }
        .links.tall { height: 40px; align-items: center; margin-top: 8px; }
        .row { display: grid; grid-template-columns: 236px 1fr auto; column-gap: 8px; align-items: center; }
        .cap { display: flex; align-items: center; gap: 8px; white-space: nowrap; }
        .cut { display: block; overflow: hidden; text-overflow: ellipsis; }
        .pick { display: grid; grid-column: 2 / 4; align-items: center; }
        .pick > * { grid-area: 1 / 1; }
        .pick ui-icon { justify-self: end; margin-right: 18px; pointer-events: none; }
        select { appearance: none; width: 100%; height: 56px; padding: 0 48px 0 12px; border: 2px solid var(--line); border-radius: 8px; color: var(--ink); }
        .big select { height: 64px; padding-left: 16px; font-size: 28px; color: var(--text); }
        .big ui-icon { opacity: .55; }
        input[type=checkbox] { appearance: none; grid-column: 3; width: 64px; height: 36px; border: 2px solid var(--line); background: linear-gradient(90deg, #fff 32px, var(--line) 32px); }
        .swatch { grid-column: 3; display: flex; align-items: center; gap: 7px; height: 48px; padding: 0 8px; border: 2px solid var(--line); border-radius: 8px; font-size: 20px; }
        .swatch i { width: 32px; height: 32px; border: 2px solid var(--line); border-radius: 6px; }
        .image { display: grid; place-items: center; width: 80px; height: 64px; border: 2px solid var(--line); border-radius: 12px; }
        .dot { width: 12px; height: 12px; border: 2px solid var(--line); }
        .dots { width: 56px; height: 56px; border: 2px solid var(--line); border-radius: 8px; text-align: center; }
      </style>
      <div class="tabs"><button class="on">EGENSKAPER</button><button>STRUKTUR</button></div>
      <prop-section label="SKJERM" first>
        <label class="strong" for="route">Rute</label>
        <input class="box" id="route" type="text" value="contas">
        <p class="hint">/contas</p>
      </prop-section>
      <prop-section label="RUTEPARAMETERE">
        <div class="links tall"><a href="#">+ legg til parameter</a></div>
      </prop-section>
      <prop-section label="MAL FOR SKJERMEN" roomy>
        <info-button slot="extra"></info-button>
        <div class="row"><label class="cap" for="layout">Layout</label>
          <div class="pick big"><select id="layout"><option>— uten layout —</option></select><ui-icon name="down"></ui-icon></div></div>
      </prop-section>
      <prop-section label="DATA" roomy>
        <info-button slot="extra"></info-button>
        <p class="note">Ingen datastorer — legg til en post eller en liste.</p>
        <div class="links"><a href="#">+ post</a><a href="#">+ liste</a></div>
      </prop-section>
      <prop-section label="OPPFØRSEL">
        <div class="row"><label class="cap" for="scroll">Rulling på skjermen</label>
          <div class="pick"><select id="scroll"><option>Automatisk</option></select><ui-icon name="down"></ui-icon></div></div>
      </prop-section>
      <prop-section label="TILGANG" roomy>
        <div class="row"><label class="cap cut" for="public">Offentlig skjerm (uten innlogging)</label><input type="checkbox" id="public"></div>
      </prop-section>
      <prop-section label="PRESENTASJON">
        <div class="row"><span class="cap"><label for="mode">Modus</label><info-button></info-button></span>
          <div class="pick"><select id="mode"><option>Skjerm</option></select><ui-icon name="down"></ui-icon></div></div>
      </prop-section>
      <prop-section label="UTSEENDE" roomy>
        <div class="row"><span class="cap">Farge</span><button class="swatch"><i></i>tema</button></div>
        <div class="row"><span class="cap">Bilde (assets)</span><button class="image" aria-label="Bilde"><ui-icon name="image"></ui-icon></button></div>
      </prop-section>
      <prop-section label="HENDELSER">
        ${['onLoad', 'onParamsChange', 'onUnload'].map(event).join('')}
      </prop-section>`;
  }
}
customElements.define('props-panel', PropsPanel);

class BuilderApp extends HTMLElement {
  connectedCallback() {
    this.attachShadow({ mode: 'open' }).innerHTML = `
      <style>
        ${RESET}
        :host { display: grid; grid-template-columns: 112px 640px minmax(0, 1fr); height: 100%; }
        main { display: flex; flex-direction: column; min-height: 0; }
        .editor { display: flex; flex: 1; flex-direction: column; min-height: 0; padding: 36px 32px 32px; }
        .head { display: flex; align-items: center; gap: 16px; height: 48px; margin-bottom: 4px; }
        h1 { font-size: 40px; line-height: 48px; font-weight: 600; color: var(--ink); }
        .path { padding: 0 18px; font-size: 24px; line-height: 40px; font-weight: 500; color: var(--ink); background: var(--soft); border-radius: 20px; }
        .work { display: grid; flex: 1; grid-template-columns: 320px minmax(0, 1fr) 576px; gap: 24px; min-height: 0; margin-top: 16px; }
      </style>
      <app-rail></app-rail>
      <side-panel></side-panel>
      <main>
        <tab-strip></tab-strip>
        <div class="editor">
          <div class="head"><h1>Contas</h1><span class="path">/contas</span></div>
          <design-toolbar></design-toolbar>
          <div class="work">
            <widget-palette></widget-palette>
            <design-canvas></design-canvas>
            <props-panel></props-panel>
          </div>
        </div>
      </main>`;
  }
}
customElements.define('builder-app', BuilderApp);
</script>
</body>
</html>
